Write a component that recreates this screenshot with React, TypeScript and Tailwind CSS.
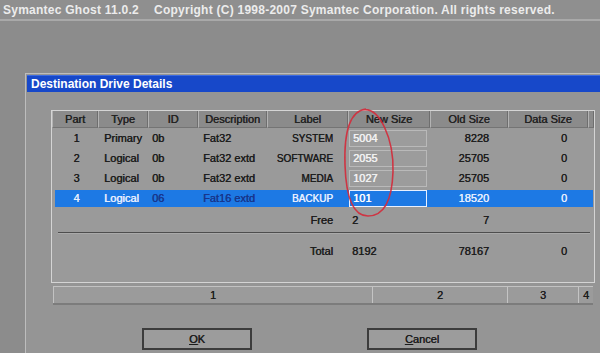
const cols = [
  { h: "Part", w: "w-[46px]" },
  { h: "Type", w: "w-[50px]" },
  { h: "ID", w: "w-[50px]" },
  { h: "Description", w: "w-[69px]" },
  { h: "Label", w: "w-[81px]" },
  { h: "New Size", w: "w-[82px]" },
  { h: "Old Size", w: "w-[78px]" },
  { h: "Data Size", w: "w-[80px]" },
  { h: "", w: "w-[6px]" },
];

const rows = [
  { part: "1", type: "Primary", id: "0b", desc: "Fat32", label: "SYSTEM", size: "5004", old: "8228", data: "0" },
  { part: "2", type: "Logical", id: "0b", desc: "Fat32 extd", label: "SOFTWARE", size: "2055", old: "25705", data: "0" },
  { part: "3", type: "Logical", id: "0b", desc: "Fat32 extd", label: "MEDIA", size: "1027", old: "25705", data: "0" },
  { part: "4", type: "Logical", id: "06", desc: "Fat16 extd", label: "BACKUP", size: "101", old: "18520", data: "0", sel: true },
];

function Row({ r }: { r: (typeof rows)[number] }) {
  const sel = !!r.sel;
  const txt = sel ? "text-[#e6eeff]" : "text-[#1c1c1c]";
  const dim = sel ? "text-[#17358c]" : "text-[#1c1c1c]";
  return (
    <div className="h-[20px] pt-[2px]">
      <div className={`ml-[3px] mr-[1px] h-[17px] flex items-center text-[11px] leading-none [text-shadow:0.4px_0_0_currentColor] ${sel ? "bg-[#1d79e4]" : ""}`}>
        <div className={`w-[43px] text-center ${txt}`}>{r.part}</div>
        <div className={`w-[50px] pl-[6px] ${txt}`}>{r.type}</div>
        <div className={`w-[50px] pl-[4px] ${dim}`}>{r.id}</div>
        <div className={`w-[69px] pl-[5px] ${dim}`}>{r.desc}</div>
        <div className={`w-[81px] pr-[15px] text-right text-[10px] ${txt}`}>{r.label}</div>
        <div className="w-[82px] pl-[1px] pr-[3px] h-full">
          <div
            className={`h-full flex items-center pl-[3px] border ${
              sel ? "border-[#e8f0ff] bg-[#1d79e4] text-white" : "border-[#b9b9b9] bg-[#9c9c9c] text-[#f2f2f2]"
            }`}
          >
            {r.size}
          </div>
        </div>
        <div className={`w-[78px] pr-[19px] text-right ${txt}`}>{r.old}</div>
        <div className={`w-[80px] pr-[21px] text-right ${txt}`}>{r.data}</div>
      </div>
    </div>
  );
}

function SumRow({ label, size, old, data }: { label: string; size: string; old: string; data: string }) {
  return (
    <div className="ml-[3px] h-[20px] flex items-center text-[11px] leading-none text-[#1c1c1c] [text-shadow:0.4px_0_0_currentColor]">
      <div className="w-[212px]" />
      <div className="w-[81px] pr-[15px] text-right">{label}</div>
      <div className="w-[82px] pl-[4px]">{size}</div>
      <div className="w-[78px] pr-[19px] text-right">{old}</div>
      <div className="w-[80px] pr-[21px] text-right">{data}</div>
    </div>
  );
}

export default function App() {
  return (
    <div className="relative w-[600px] h-[353px] overflow-hidden bg-[#8c8c8c] font-['Liberation_Sans',Arial,sans-serif]">
      {/* top banner */}
      <div className="h-[19px] bg-[#8f8f8f] flex items-center pl-[3px] text-[12px] tracking-[0.25px] font-bold text-[#ececec] whitespace-nowrap">
        <span>Symantec Ghost 11.0.2</span>
        <span className="ml-[15px]">Copyright (C) 1998-2007 Symantec Corporation. All rights reserved.</span>
      </div>
      <div className="h-[2px] bg-[#a9a9a9]" />

      {/* dialog */}
      <div className="mt-[52px] ml-[25px] w-[600px] h-[300px] border-l border-t border-[#bdbdbd] bg-[#959595] p-[1px]">
        <div className="h-[17px] bg-[#1748c9] border-t border-[#3d6be0] flex items-center pl-[4px] text-[12px] font-bold text-white whitespace-nowrap">
          Destination Drive Details
        </div>

        {/* table panel */}
        <div className="mt-[18px] ml-[24px] w-[544px] h-[173px] border border-[#d4d4d4] bg-[#9a9a9a]">
          <div className="flex h-[17px] bg-[#8b8b8b]">
            {cols.map((c, i) => (
              <div
                key={i}
                className={`${c.w} h-full flex items-center justify-center text-[11px] leading-none text-[#222] [text-shadow:0.4px_0_0_currentColor] border-l border-l-[#b3b3b3] border-r border-r-[#6e6e6e] border-b border-b-[#747474]`}
              >
                {c.h}
              </div>
            ))}
          </div>
          {rows.map((r) => (
            <Row key={r.part} r={r} />
          ))}
          <div className="mt-[2px]">
            <SumRow label="Free" size="2" old="7" data="" />
          </div>
          <div className="mt-[2px] ml-[6px] w-[532px] h-[1px] bg-[#4e4e4e]" />
          <div className="ml-[6px] w-[532px] h-[1px] bg-[#aaaaaa]" />
          <div className="mt-[7px]">
            <SumRow label="Total" size="8192" old="78167" data="0" />
          </div>
        </div>

        {/* drive bar */}
        <div className="mt-[3px] ml-[26px] w-[540px] h-[17px] flex bg-[#9b9b9b] border-t border-l border-[#c2c2c2] shadow-[0_2px_0_#7c7c7c] text-[11px] leading-none text-[#1c1c1c] [text-shadow:0.4px_0_0_currentColor]">
          <div className="w-[319px] flex items-center justify-center border-r border-[#c4c4c4]">1</div>
          <div className="w-[135px] flex items-center justify-center border-r border-[#c4c4c4]">2</div>
          <div className="w-[71px] flex items-center justify-center border-r border-[#c4c4c4]">3</div>
          <div className="flex-1 flex items-center justify-center">4</div>
        </div>

        {/* buttons */}
        <div className="mt-[25px] ml-[115px] flex gap-[115px]">
          <button className="w-[110px] h-[22px] border-2 border-[#3c3c3c] bg-[#9c9c9c] text-[11px] text-[#1c1c1c] [text-shadow:0.4px_0_0_currentColor]">
            <span className="underline">O</span>K
          </button>
          <button className="w-[110px] h-[22px] border-2 border-[#3c3c3c] bg-[#9c9c9c] text-[11px] text-[#1c1c1c] [text-shadow:0.4px_0_0_currentColor]">
            <span className="underline">C</span>ancel
          </button>
        </div>
      </div>

      {/* red hand-drawn annotation */}
      <svg className="absolute left-0 top-0 pointer-events-none" width="600" height="353">
        <path
          d="M362 110 C 380 106, 394 140, 393 172 C 392 200, 384 216, 368 216 C 352 216, 346 196, 345 165 C 344 135, 348 111, 366 109"
          fill="none"
          stroke="#d42a3a"
          strokeWidth="1.6"
          opacity="0.9"
        />
      </svg>
    </div>
  );
}
